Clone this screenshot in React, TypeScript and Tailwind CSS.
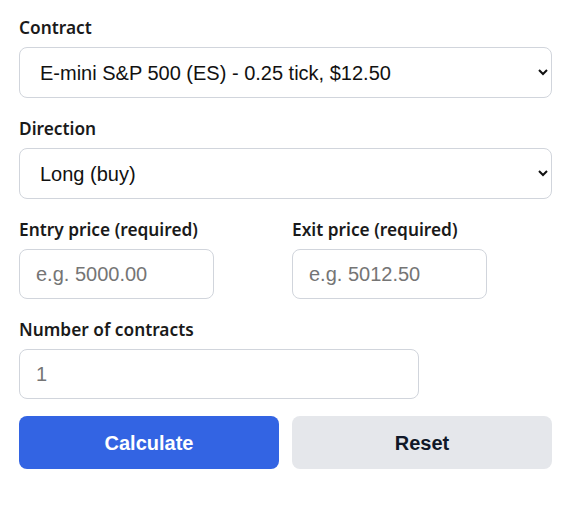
import { useState } from 'react';

const contracts = [
  'E-mini S&P 500 (ES) - 0.25 tick, $12.50',
  'Micro E-mini S&P 500 (MES) - 0.25 tick, $1.25',
  'E-mini Nasdaq-100 (NQ) - 0.25 tick, $5.00',
];

const labelCls = "block pt-[2px] text-[17.3px] leading-6 font-semibold text-[#1a1a1a] [font-family:'Noto_Sans',sans-serif]";
const fieldCls =
  "rounded-lg border border-gray-300 bg-white px-4 text-xl text-[#111] placeholder:text-[#757575] outline-none [font-family:'Liberation_Sans',Arial,sans-serif]";

export default function App() {
  const [contract, setContract] = useState(contracts[0]);
  const [direction, setDirection] = useState('long');
  const [entry, setEntry] = useState('');
  const [exit, setExit] = useState('');
  const [qty, setQty] = useState('');

  const reset = () => {
    setContract(contracts[0]);
    setDirection('long');
    setEntry('');
    setExit('');
    setQty('');
  };

  return (
    <div className="min-h-screen bg-white">
      <form
        className="flex w-[552px] flex-col gap-[17px] pl-[19px] pt-[14px]"
        onSubmit={(e) => e.preventDefault()}
      >
        {/* Contract */}
        <div className="flex flex-col gap-[7px]">
          <label className={labelCls}>Contract</label>
          <select
            className={`${fieldCls} h-[51px] w-full`}
            value={contract}
            onChange={(e) => setContract(e.target.value)}
          >
            {contracts.map((c) => (
              <option key={c}>{c}</option>
            ))}
          </select>
        </div>

        {/* Direction */}
        <div className="flex flex-col gap-[7px]">
          <label className={labelCls}>Direction</label>
          <select
            className={`${fieldCls} h-[51px] w-full`}
            value={direction}
            onChange={(e) => setDirection(e.target.value)}
          >
            <option value="long">Long (buy)</option>
            <option value="short">Short (sell)</option>
          </select>
        </div>

        {/* Prices */}
        <div className="grid grid-cols-2 gap-[13px]">
          <div className="flex flex-col gap-[7px]">
            <label className={labelCls}>Entry price (required)</label>
            <input
              className={`${fieldCls} h-[50px] w-3/4`}
              placeholder="e.g. 5000.00"
              value={entry}
              onChange={(e) => setEntry(e.target.value)}
            />
          </div>
          <div className="flex flex-col gap-[7px]">
            <label className={labelCls}>Exit price (required)</label>
            <input
              className={`${fieldCls} h-[50px] w-3/4`}
              placeholder="e.g. 5012.50"
              value={exit}
              onChange={(e) => setExit(e.target.value)}
            />
          </div>
        </div>

        {/* Quantity */}
        <div className="flex flex-col gap-[7px]">
          <label className={labelCls}>Number of contracts</label>
          <input
            className={`${fieldCls} h-[50px] w-3/4`}
            placeholder="1"
            value={qty}
            onChange={(e) => setQty(e.target.value)}
          />
        </div>

        {/* Actions */}
        <div className="grid grid-cols-2 gap-[13px]">
          <button
            type="submit"
            className="h-[53px] rounded-lg bg-[#3364e3] text-xl font-bold text-white [font-family:'Liberation_Sans',Arial,sans-serif]"
          >
            Calculate
          </button>
          <button
            type="button"
            onClick={reset}
            className="h-[53px] rounded-lg bg-gray-200 text-xl font-bold text-gray-900 [font-family:'Liberation_Sans',Arial,sans-serif]"
          >
            Reset
          </button>
        </div>
      </form>
    </div>
  );
}
